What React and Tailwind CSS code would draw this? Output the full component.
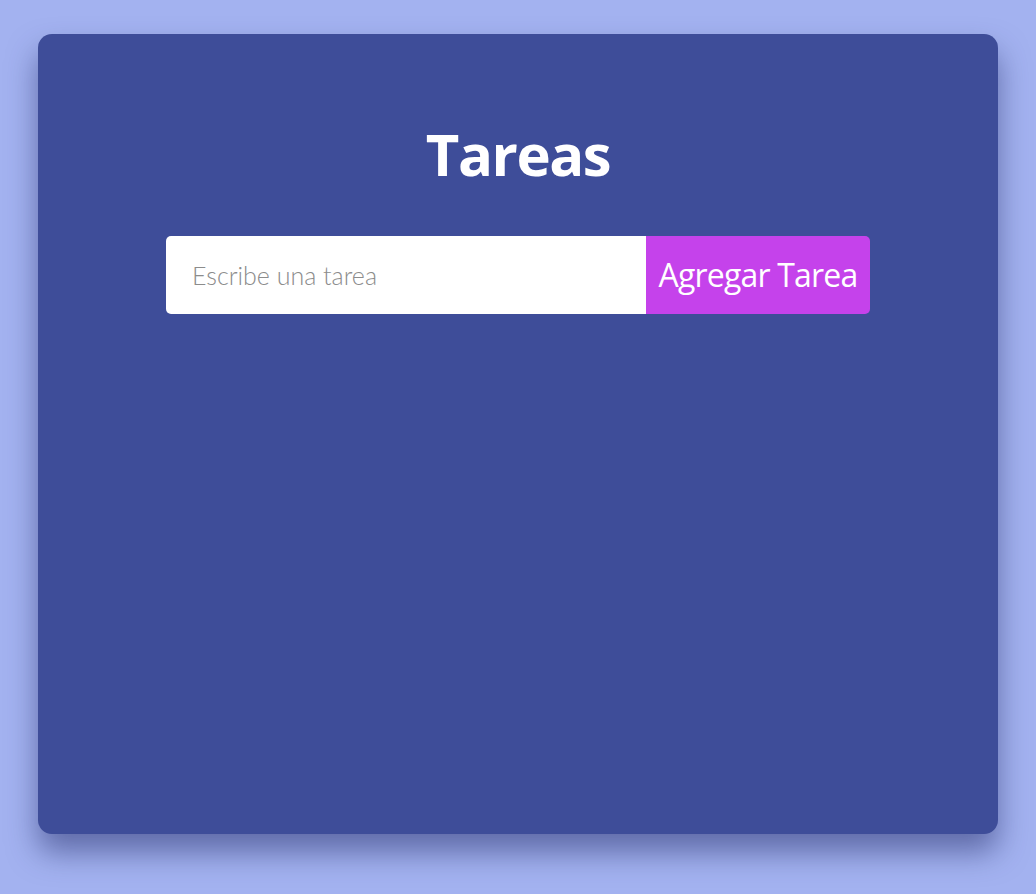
export default function App() {
  return (
    <div className="min-h-screen w-full bg-[#a3b2f0] flex justify-center pt-[34px] pb-[60px]">
      <div className="w-[960px] h-[800px] bg-[#3e4d99] rounded-[14px] shadow-[0_18px_30px_rgba(40,50,110,0.55)] flex flex-col items-center pt-[85px]">
        <h1 className="text-white text-[58px] leading-[70px] font-bold font-['Open_Sans',sans-serif] tracking-tight">
          Tareas
        </h1>
        <form className="mt-[47px] flex w-[704px] h-[78px]" onSubmit={(e) => e.preventDefault()}>
          <input
            type="text"
            placeholder="Escribe una tarea"
            className="w-[480px] h-full bg-white rounded-l-[5px] pl-[26px] text-[25px] font-light text-gray-700 placeholder:text-[#8c8c8c] font-['Lato',sans-serif] outline-none"
          />
          <button
            type="submit"
            className="flex-1 h-full bg-[#c542eb] rounded-r-[5px] text-white text-[32px] font-['Open_Sans',sans-serif] tracking-tight"
          >
            Agregar Tarea
          </button>
        </form>
      </div>
    </div>
  );
}
